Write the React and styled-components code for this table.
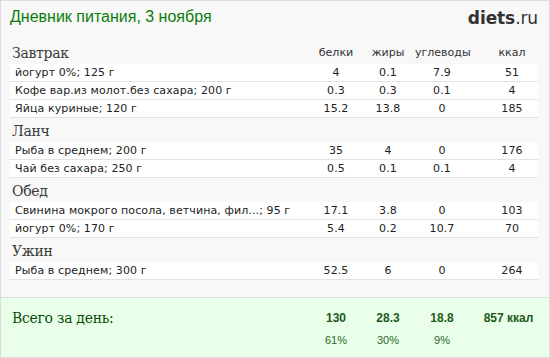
import React from "react";
import styled, { createGlobalStyle } from "styled-components";

const Global = createGlobalStyle`
  html, body { margin: 0; padding: 0; background: #fff; }
  * { box-sizing: border-box; }
`;

const Frame = styled.div`
  width: 550px;
  height: 358px;
  border: 1px solid #dcdcdc;
  background: #f8f8f8;
  display: flex;
  flex-direction: column;
  overflow: hidden;
`;

const Header = styled.div`
  height: 39px;
  display: flex;
  justify-content: space-between;
  align-items: flex-start;
  padding: 6px 11px 0 9px;
`;

const Title = styled.h1`
  margin: 0;
  font: normal 16px/20px "Liberation Sans", Arial, sans-serif;
  color: #0a7d0a;
`;

const Logo = styled.div`
  font: 700 17px/20px "DejaVu Sans", "Open Sans", sans-serif;
  color: #333;
  letter-spacing: -0.1px;
  padding-top: 1px;
  span { font-weight: 400; }
`;

const Body = styled.div`
  padding: 0 11px 0 9px;
  flex: 1;
`;

const cols = "1fr 50px 54px 54px 69px";

const Section = styled.div``;

const SectionHead = styled.div`
  display: grid;
  grid-template-columns: ${cols};
  height: 24px;
  align-items: end;
  padding-bottom: 3px;
`;

const SectionTitle = styled.div`
  font: normal 14px/16px "DejaVu Serif", Georgia, serif;
  color: #3a3a3a;
  padding-left: 2px;
  letter-spacing: -0.3px;
`;

const ColLabel = styled.div`
  font: normal 11px/14px "DejaVu Sans", Verdana, sans-serif;
  color: #333;
  text-align: center;
  padding-left: ${(p) => (p.$last ? "17px" : "0")};
  padding-bottom: 1px;
`;

const Row = styled.div`
  display: grid;
  grid-template-columns: ${cols};
  height: 18px;
  background: #fff;
  border-bottom: 1px solid #e2e2e2;
  align-items: center;
  font: normal 11px/14px "DejaVu Sans", Verdana, sans-serif;
  letter-spacing: 0.1px;
  color: #222;
`;

const Name = styled.div`
  padding-left: 5px;
  white-space: nowrap;
  overflow: hidden;
`;

const Num = styled.div`
  text-align: center;
  padding-left: ${(p) => (p.$last ? "17px" : "0")};
`;

const Totals = styled.div`
  margin-top: auto;
  height: 60px;
  border-top: 1px solid #dcdcdc;
  background: #eaffea;
  padding: 11px 11px 0 9px;
  display: grid;
  grid-template-columns: ${cols};
  grid-template-rows: 18px 24px;
  align-items: center;
`;

const TotalLabel = styled.div`
  font: normal 14px/18px "DejaVu Serif", Georgia, serif;
  color: #0b4e0b;
  padding-left: 2px;
  letter-spacing: -0.3px;
`;

const TotalNum = styled.div`
  font: 700 12px/16px "Liberation Sans", Arial, sans-serif;
  color: #1c5a1c;
  text-align: center;
  padding-left: ${(p) => (p.$last ? "10px" : "0")};
`;

const Pct = styled.div`
  grid-row: 2;
  grid-column: ${(p) => p.$col};
  font: normal 11px/14px "Liberation Sans", Arial, sans-serif;
  color: #2a662a;
  text-align: center;
  padding-top: 2px;
`;

const data = [
  {
    title: "Завтрак",
    header: true,
    rows: [
      ["йогурт 0%; 125 г", "4", "0.1", "7.9", "51"],
      ["Кофе вар.из молот.без сахара; 200 г", "0.3", "0.3", "0.1", "4"],
      ["Яйца куриные; 120 г", "15.2", "13.8", "0", "185"],
    ],
  },
  {
    title: "Ланч",
    rows: [
      ["Рыба в среднем; 200 г", "35", "4", "0", "176"],
      ["Чай без сахара; 250 г", "0.5", "0.1", "0.1", "4"],
    ],
  },
  {
    title: "Обед",
    rows: [
      ["Свинина мокрого посола, ветчина, фил...; 95 г", "17.1", "3.8", "0", "103"],
      ["йогурт 0%; 170 г", "5.4", "0.2", "10.7", "70"],
    ],
  },
  {
    title: "Ужин",
    rows: [["Рыба в среднем; 300 г", "52.5", "6", "0", "264"]],
  },
];

export default function App() {
  return (
    <>
      <Global />
      <Frame>
        <Header>
          <Title>Дневник питания, 3 ноября</Title>
          <Logo>
            diets<span>.ru</span>
          </Logo>
        </Header>
        <Body>
          {data.map((s) => (
            <Section key={s.title}>
              <SectionHead>
                <SectionTitle>{s.title}</SectionTitle>
                {s.header && (
                  <>
                    <ColLabel>белки</ColLabel>
                    <ColLabel>жиры</ColLabel>
                    <ColLabel>углеводы</ColLabel>
                    <ColLabel $last>ккал</ColLabel>
                  </>
                )}
              </SectionHead>
              {s.rows.map((r, i) => (
                <Row key={i}>
                  <Name>{r[0]}</Name>
                  <Num>{r[1]}</Num>
                  <Num>{r[2]}</Num>
                  <Num>{r[3]}</Num>
                  <Num $last>{r[4]}</Num>
                </Row>
              ))}
            </Section>
          ))}
        </Body>
        <Totals>
          <TotalLabel>Всего за день:</TotalLabel>
          <TotalNum>130</TotalNum>
          <TotalNum>28.3</TotalNum>
          <TotalNum>18.8</TotalNum>
          <TotalNum $last>857 ккал</TotalNum>
          <Pct $col={2}>61%</Pct>
          <Pct $col={3}>30%</Pct>
          <Pct $col={4}>9%</Pct>
        </Totals>
      </Frame>
    </>
  );
}
